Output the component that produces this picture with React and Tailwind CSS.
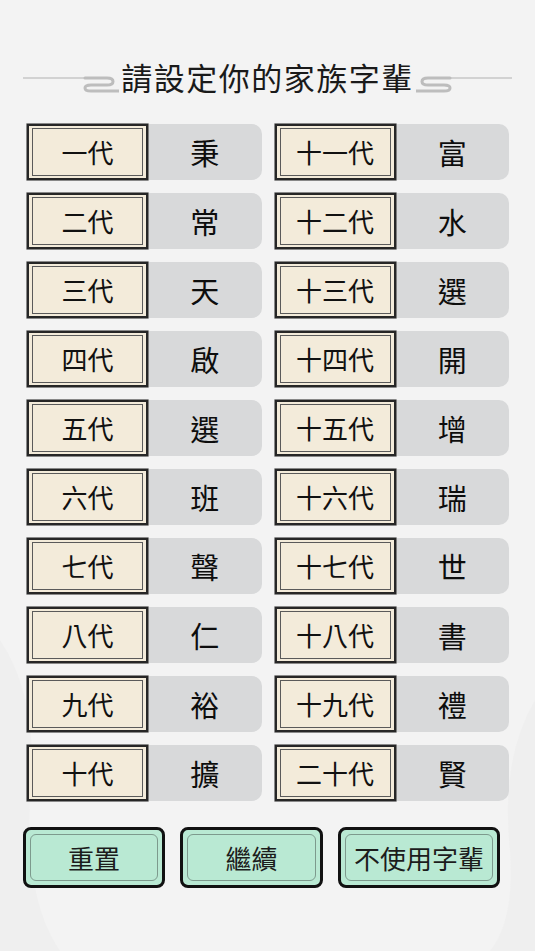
import React from "react";

const left = [
  ["一代", "秉"],
  ["二代", "常"],
  ["三代", "天"],
  ["四代", "啟"],
  ["五代", "選"],
  ["六代", "班"],
  ["七代", "聲"],
  ["八代", "仁"],
  ["九代", "裕"],
  ["十代", "擴"],
];
const right = [
  ["十一代", "富"],
  ["十二代", "水"],
  ["十三代", "選"],
  ["十四代", "開"],
  ["十五代", "增"],
  ["十六代", "瑞"],
  ["十七代", "世"],
  ["十八代", "書"],
  ["十九代", "禮"],
  ["二十代", "賢"],
];

const font = {
  fontFamily: '"Noto Sans CJK TC", "Noto Sans CJK SC", "Noto Sans", sans-serif',
};

function Swirl({ flip }) {
  return (
    <svg
      width="96"
      height="22"
      viewBox="0 0 96 22"
      className={flip ? "-scale-x-100" : ""}
    >
      <path d="M0 4 H86" stroke="#d2d2d2" strokeWidth="2" fill="none" />
      <path
        d="M62 4 H84 Q90 4 90 7.5 Q90 11 84 11 H68 Q62 11 62 14 Q62 17 68 17 H96"
        stroke="#bdbdbd"
        strokeWidth="3"
        fill="none"
        strokeLinecap="round"
      />
    </svg>
  );
}

function Row({ label, value }) {
  return (
    <div className="flex h-[56px] bg-[#d8d9da] rounded-r-[10px]">
      <div className="w-[121px] h-full bg-[#f3ebda] border-2 border-[#262626] pt-[2px] pb-[2px] pl-[3px] pr-[3px] shadow-[0_0_0_0.6px_#444]">
        <div className="h-full border border-[#5a5a5a] flex items-center justify-center text-[26px] text-[#111] leading-none">
          {label}
        </div>
      </div>
      <div className="flex-1 flex items-center justify-center text-[29px] text-[#0d0d0d] leading-none">
        {value}
      </div>
    </div>
  );
}

function Btn({ w, children }) {
  return (
    <div
      className={`${w} h-[61px] bg-[#b9e9d3] border-[3px] border-[#111] rounded-[8px] p-[4px]`}
    >
      <div className="h-full border border-[#7d9a8d] rounded-[6px] flex items-center justify-center text-[26px] text-[#1c1c1c] leading-none">
        {children}
      </div>
    </div>
  );
}

export default function App() {
  return (
    <div
      className="relative w-full h-[951px] bg-[#f3f3f3] overflow-hidden"
      style={font}
    >
      <svg
        className="absolute left-0 top-0 w-full h-full pointer-events-none"
        viewBox="0 0 535 951"
        preserveAspectRatio="none"
      >
        <path
          d="M0 640 Q40 700 30 800 Q25 900 60 951 L0 951 Z"
          fill="#ececec"
          opacity="0.6"
        />
        <path
          d="M535 700 Q500 760 510 850 Q515 920 490 951 L535 951 Z"
          fill="#ececec"
          opacity="0.6"
        />
      </svg>

      <div className="relative flex flex-col">
        <div className="pt-[57px] flex items-center justify-center">
          <div className="mt-[16px]">
            <Swirl />
          </div>
          <div className="text-[31px] leading-[40px] tracking-[1.5px] text-[#1a1a1a] px-[2px]">
            請設定你的家族字輩
          </div>
          <div className="mt-[16px]">
            <Swirl flip />
          </div>
        </div>

        <div className="mt-[27px] pl-[27px] pr-[26px] grid grid-cols-2 gap-x-[13px] gap-y-[13px]">
          {left.map((l, i) => (
            <React.Fragment key={i}>
              <Row label={l[0]} value={l[1]} />
              <Row label={right[i][0]} value={right[i][1]} />
            </React.Fragment>
          ))}
        </div>

        <div className="mt-[26px] pl-[23px] flex gap-[15px]">
          <Btn w="w-[142px]">重置</Btn>
          <Btn w="w-[143px]">繼續</Btn>
          <Btn w="w-[162px]">不使用字輩</Btn>
        </div>
      </div>
    </div>
  );
}
